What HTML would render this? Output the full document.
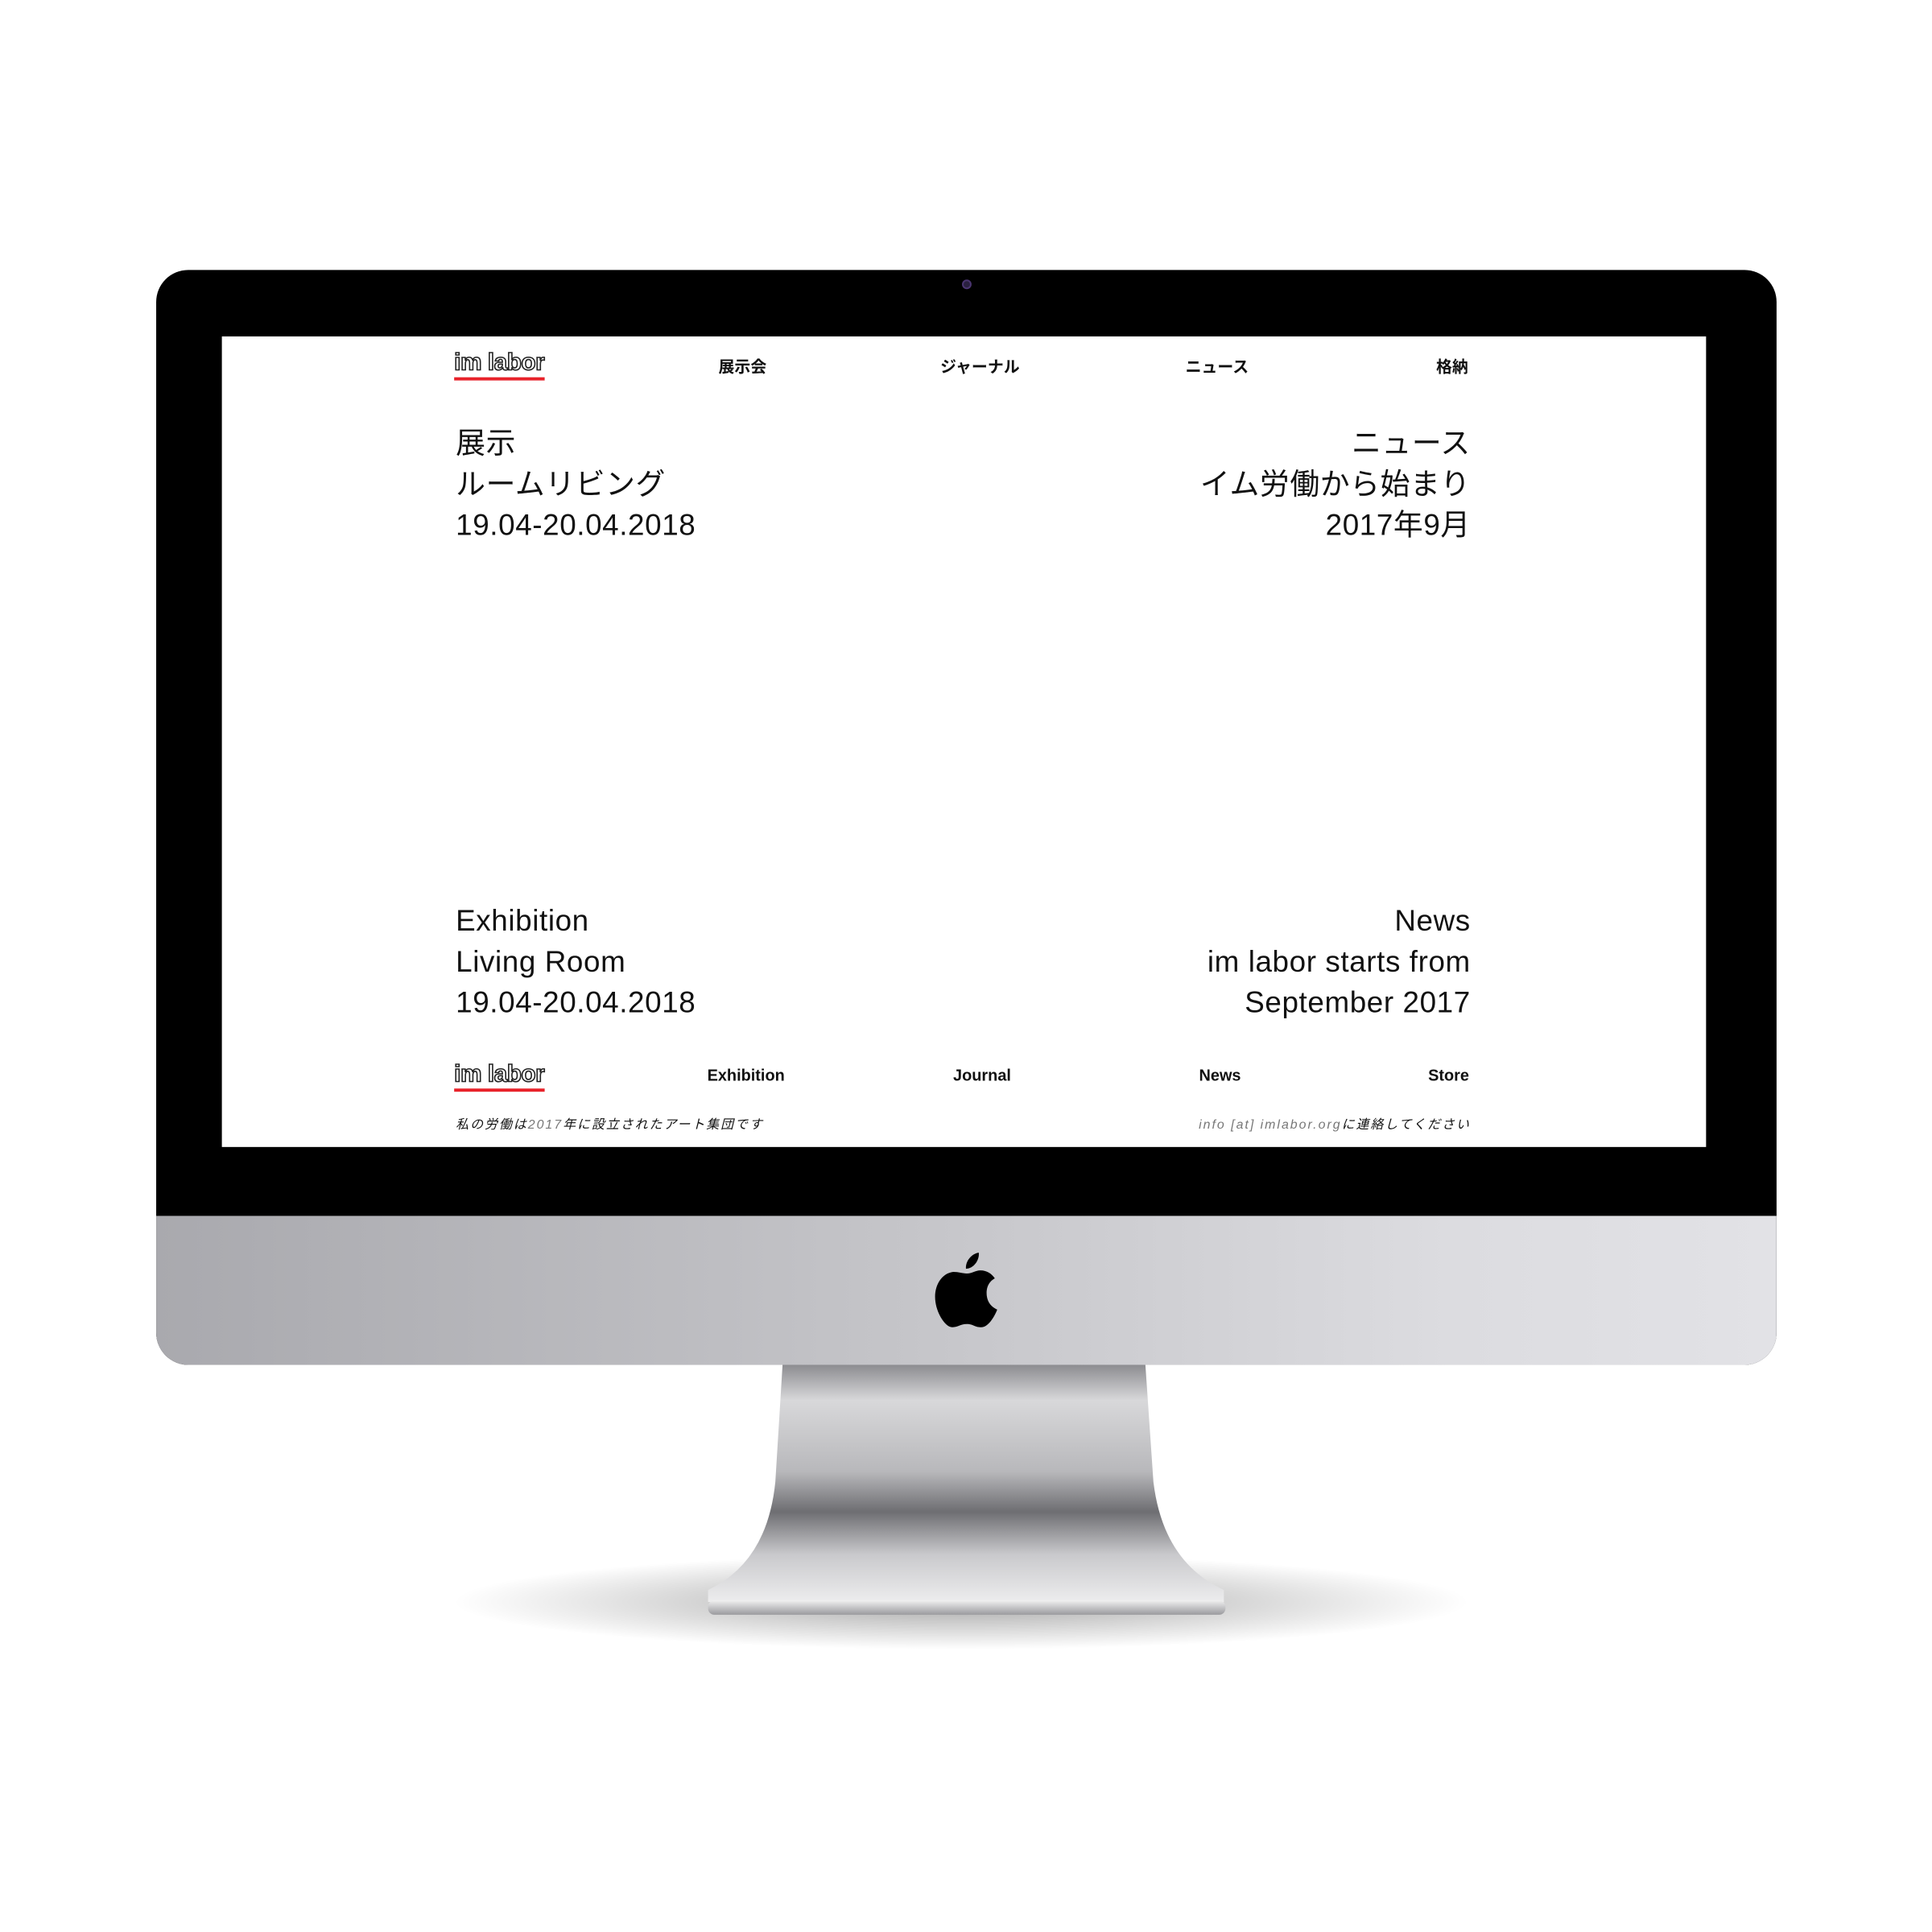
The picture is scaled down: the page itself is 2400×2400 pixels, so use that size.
<!DOCTYPE html>
<html><head><meta charset="utf-8"><style>
*{margin:0;padding:0;box-sizing:border-box}
body{width:2400px;height:2400px;background:#fff;position:relative;overflow:hidden;font-family:"Liberation Sans","Noto Sans CJK JP",sans-serif;color:#111}
#wrap{position:absolute;left:0;top:0;width:2400px;height:2400px;transform:scale(0.995);transform-origin:0 0}
.abs{position:absolute}
#mon{left:195px;top:337px;width:2023px;height:1367px;border-radius:40px;background:#000;overflow:hidden}
#chin{left:0;top:1181px;width:2023px;height:186px;background:linear-gradient(90deg,#a9a9ae,#c4c4c8 45%,#dcdce0 80%,#e2e2e6)}
#screen{left:277px;top:420px;width:1853px;height:1012px;background:#fff}
.logo{font-family:"Liberation Sans",sans-serif;font-weight:bold;font-size:30px;color:#fff;-webkit-text-stroke:1.6px #222;letter-spacing:-0.5px;border-bottom:4px solid #e8222a;line-height:30px;padding-bottom:3px}
.nav{font-weight:bold;font-size:20px}
.big{font-size:37px;line-height:51px;letter-spacing:0.6px}
.sm{font-size:16px;font-style:italic;letter-spacing:2px}
</style></head><body>
<div id="wrap">
<div class="abs" style="left:560px;top:1940px;width:1280px;height:120px;border-radius:50%;background:radial-gradient(ellipse,rgba(0,0,0,.35),rgba(0,0,0,0) 70%)"></div>
<svg class="abs" style="left:0;top:0" width="2400" height="2400">
<defs>
<linearGradient id="st" x1="0" y1="0" x2="0" y2="1">
<stop offset="0" stop-color="#8c8c90"/><stop offset=".15" stop-color="#d8d8da"/><stop offset=".45" stop-color="#b8b8bb"/><stop offset=".62" stop-color="#6e6e72"/><stop offset=".8" stop-color="#c9c9cc"/><stop offset="1" stop-color="#ededee"/></linearGradient>
<linearGradient id="bs" x1="0" y1="0" x2="0" y2="1"><stop offset="0" stop-color="#f0f0f0"/><stop offset="1" stop-color="#9a9a9e"/></linearGradient>
</defs>
<path d="M977 1704 L1430 1704 L1440 1850 Q1452 1950 1528 1985 L1528 2000 L884 2000 L884 1985 Q958 1950 968 1850 Z" fill="url(#st)"/>
<rect x="884" y="1998" width="646" height="18" rx="8" fill="url(#bs)"/>
</svg>
<div id="mon" class="abs">
<div id="chin" class="abs"></div>
</div>
<div class="abs" style="left:1201px;top:349px;width:12px;height:12px;border-radius:50%;background:#2a2140;border:2px solid #4a3570"></div>
<svg class="abs" style="left:1166px;top:1562px" width="82" height="96" viewBox="0 0 82 96" style="filter:drop-shadow(0 0 6px #fff)">
<path d="M56 2 C57 12 49 22 40 22 C39 13 47 3 56 2 Z" fill="#000"/>
<path d="M41 28 C47 28 52 24 58 24 C66 24 72 28 76 34 C67 39 65 48 66 56 C67 64 72 70 79 73 C75 83 67 96 58 95 C51 95 49 91 41 91 C33 91 30 95 23 95 C14 95 4 78 2 64 C-1 46 8 28 24 26 C31 26 36 28 41 28 Z" fill="#000"/>
</svg>
<div id="screen" class="abs"></div>
<div class="abs logo" style="left:567px;top:438px">im labor</div>
<div class="abs nav" style="left:897px;top:442px">展示会</div>
<div class="abs nav" style="left:1174px;top:442px">ジャーナル</div>
<div class="abs nav" style="left:1480px;top:442px">ニュース</div>
<div class="abs nav" style="left:1793px;top:442px">格納</div>
<div class="abs big" style="left:569px;top:528px">展示<br>ルームリビング<br>19.04-20.04.2018</div>
<div class="abs big" style="right:564px;top:528px;text-align:right">ニュース<br>イム労働から始まり<br>2017年9月</div>
<div class="abs big" style="left:569px;top:1124px">Exhibition<br>Living Room<br>19.04-20.04.2018</div>
<div class="abs big" style="right:564px;top:1124px;text-align:right">News<br>im labor starts from<br>September 2017</div>
<div class="abs logo" style="left:567px;top:1326px">im labor</div>
<div class="abs nav" style="left:883px;top:1332px">Exhibition</div>
<div class="abs nav" style="left:1190px;top:1332px">Journal</div>
<div class="abs nav" style="left:1497px;top:1332px">News</div>
<div class="abs nav" style="left:1783px;top:1332px">Store</div>
<div class="abs sm" style="left:569px;top:1390px">私の労働は<span style="color:#777">2017</span>年に設立されたアート集団です</div>
<div class="abs sm" style="right:564px;top:1390px"><span style="color:#777">info [at] imlabor.org</span>に連絡してください</div>
</div>
</body></html>
